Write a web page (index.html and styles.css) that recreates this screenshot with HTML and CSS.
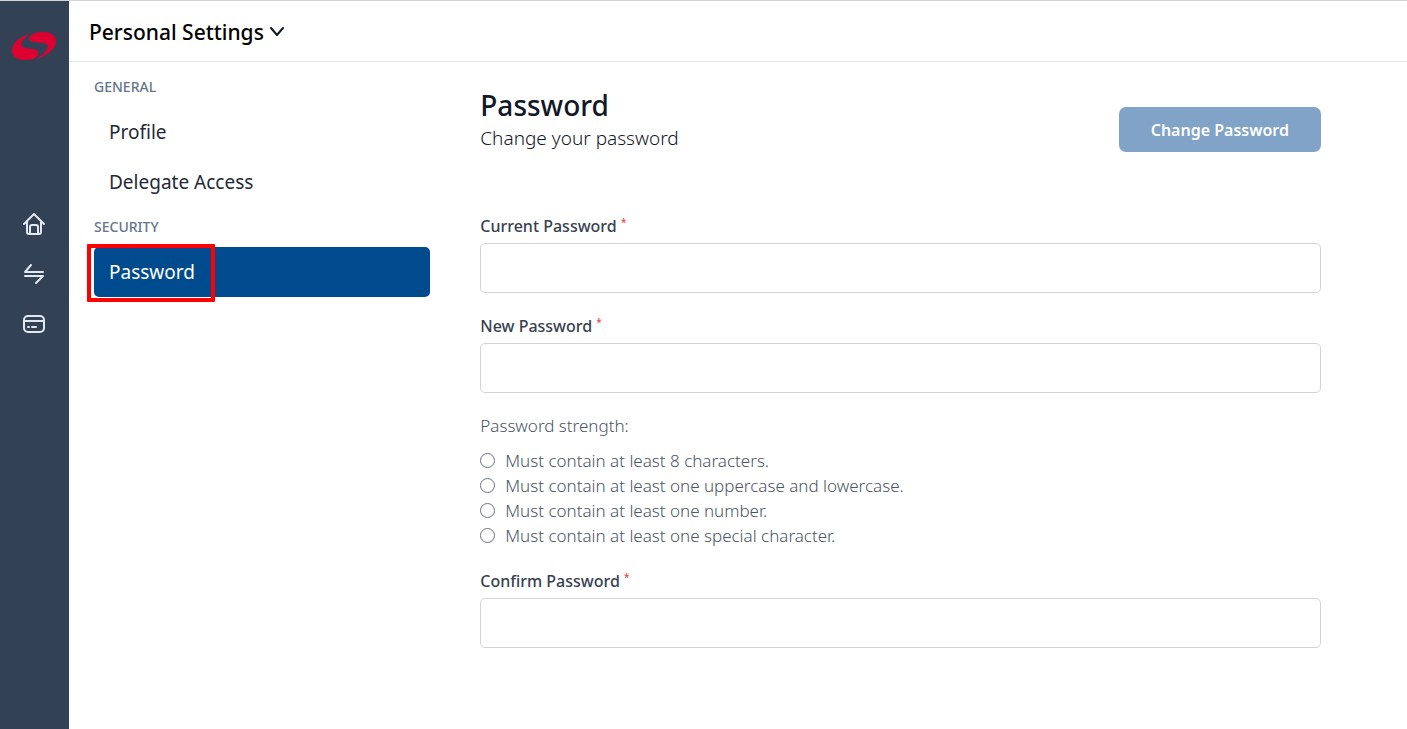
FILE: index.html
```html
<!DOCTYPE html>
<html lang="en">
<head>
    <meta charset="UTF-8">
    <meta name="viewport" content="width=device-width, initial-scale=1.0">
    <title>Personal Settings</title>
    <link rel="stylesheet" href="styles.css">
</head>
<body>

<aside class="sidebar">
    <a href="/" class="logo" aria-label="Start page">
        <svg width="46" height="30" viewBox="0 0 46 30" fill="#de0030">
            <path d="M19 3C9 5 1 12 1 20c0 6 6 9 14 9 7 0 12-3 12-6 1-3-2-5-6-5l-6-1c-5-1-6-3-4-6 1-3 4-6 8-8z"/>
            <path d="M24 28c11-2 21-10 21-18 0-6-6-9-14-9-7 0-12 3-13 6 0 3 3 4 7 4l7 1c5 1 6 3 4 6-2 4-7 8-12 10z"/>
        </svg>
    </a>
    <nav class="side-nav">
        <a href="/home" aria-label="Home">
            <svg class="icon" width="22" height="22" viewBox="0 0 22 22">
                <path d="M1 11L11 1l10 10M4 9v10a2 2 0 0 0 2 2h10a2 2 0 0 0 2-2V9"/>
                <path d="M7 21v-7a2 2 0 0 1 2-2h4a2 2 0 0 1 2 2v7"/>
            </svg>
        </a>
        <a href="/transfers" aria-label="Transfers">
            <svg class="icon" width="22" height="22" viewBox="0 0 22 22">
                <path d="M8 2L2 9h18M2 13h18l-7 7"/>
            </svg>
        </a>
        <a href="/cards" aria-label="Cards">
            <svg class="icon" width="22" height="22" viewBox="0 0 22 22">
                <rect x="1" y="3" width="20" height="16" rx="4"/>
                <path d="M1 8h20M5 14h1M9 14h4"/>
            </svg>
        </a>
    </nav>
</aside>

<div class="page">
    <header>
        <button type="button" class="title-btn">
            Personal Settings
            <svg width="16" height="10" viewBox="0 0 16 10" fill="none" stroke="#111827" stroke-width="2" stroke-linecap="round" stroke-linejoin="round">
                <path d="M2 1l6 7 6-7"/>
            </svg>
        </button>
    </header>

    <div class="content">
        <nav class="settings-nav">
            <h2>GENERAL</h2>
            <a href="/settings/profile">Profile</a>
            <a href="/settings/delegate-access">Delegate Access</a>
            <h2>SECURITY</h2>
            <a href="/settings/password" class="active">Password<span class="marker"></span></a>
        </nav>

        <main>
            <form>
                <div class="form-header">
                    <div>
                        <h1>Password</h1>
                        <p>Change your password</p>
                    </div>
                    <button type="submit" class="submit-btn" disabled>Change Password</button>
                </div>

                <div class="field">
                    <label for="current">Current Password <sup>*</sup></label>
                    <input type="password" id="current">
                </div>
                <div class="field">
                    <label for="new">New Password <sup>*</sup></label>
                    <input type="password" id="new">
                </div>

                <div class="strength">
                    <p>Password strength:</p>
                    <ul>
                        <li><input type="radio" id="rule-length"><label for="rule-length">Must contain at least 8 characters.</label></li>
                        <li><input type="radio" id="rule-case"><label for="rule-case">Must contain at least one uppercase and lowercase.</label></li>
                        <li><input type="radio" id="rule-number"><label for="rule-number">Must contain at least one number.</label></li>
                        <li><input type="radio" id="rule-special"><label for="rule-special">Must contain at least one special character.</label></li>
                    </ul>
                </div>

                <div class="field">
                    <label for="confirm">Confirm Password <sup>*</sup></label>
                    <input type="password" id="confirm">
                </div>
            </form>
        </main>
    </div>
</div>

</body>
</html>
```
FILE: styles.css
```css
* {
    box-sizing: border-box;
}

body {
    margin: 0;
    min-height: 100vh;
    display: flex;
    border-top: 1px solid #d4d4d4;
    font-family: "Segoe UI", "Noto Sans", "Open Sans", sans-serif;
    font-size: 16px;
    line-height: 25px;
    color: #111827;
    background: white;
}

h1, h2, p, ul {
    margin: 0;
    padding: 0;
}

.sidebar {
    width: 69px;
    background: #334155;
    display: flex;
    flex-direction: column;
    align-items: center;
    padding: 30px 1px 0 0;
}

.logo, .side-nav a {
    display: flex;
}

.side-nav {
    display: flex;
    flex-direction: column;
    gap: 28px;
    margin-top: 152px;
}

.icon {
    fill: none;
    stroke: #e2e8f0;
    stroke-width: 2;
    stroke-linecap: round;
    stroke-linejoin: round;
}

.page {
    flex: 1;
}

header {
    height: 61px;
    display: flex;
    align-items: center;
    padding: 2px 20px 0;
    border-bottom: 1px solid #e5e7eb;
}

.title-btn {
    display: flex;
    align-items: center;
    gap: 5px;
    padding: 0;
    border: none;
    background: none;
    font-family: inherit;
    font-size: 21px;
    font-weight: 500;
    color: black;
    cursor: pointer;
}

.content {
    display: grid;
    grid-template-columns: 2fr 5fr;
    gap: 50px;
    padding: 12px 86px 40px 25px;
}

.settings-nav h2 {
    font-size: 14px;
    font-weight: 500;
    line-height: 25px;
    margin-bottom: 8px;
    color: #64748b;
}

.settings-nav a {
    display: block;
    position: relative;
    padding: 0 15px;
    border-radius: 5px;
    font-size: 19px;
    line-height: 50px;
    color: #1f2937;
    text-decoration: none;
}

.settings-nav a + h2 {
    margin-top: 7px;
}

.settings-nav a.active {
    background: #004b8d;
    color: white;
}

/* red frame around the active item */
.marker {
    position: absolute;
    left: -7px;
    top: -3px;
    width: 128px;
    height: 58px;
    border: 4px solid red;
    border-radius: 1px;
}

.form-header {
    display: flex;
    justify-content: space-between;
    align-items: flex-end;
    padding: 12px 0 61px;
}

h1 {
    font-size: 28px;
    font-weight: 500;
    line-height: 38px;
}

.form-header p {
    font-size: 19px;
    font-weight: 300;
    line-height: 28px;
}

.submit-btn {
    height: 45px;
    padding: 0 32px;
    border: none;
    border-radius: 7px;
    background: #80a3c7;
    font-family: inherit;
    font-size: 16px;
    font-weight: 600;
    color: white;
}

.field {
    margin-bottom: 20px;
}

.field label {
    display: block;
    margin-bottom: 4px;
    font-weight: 500;
    line-height: 26px;
    color: #374151;
}

.field sup {
    font-size: 10px;
    line-height: 0;
    color: #ef4444;
}

.field input {
    display: block;
    width: 100%;
    height: 50px;
    padding: 0 15px;
    border: 1px solid #d1d5db;
    border-radius: 5px;
    font-size: 16px;
}

.strength {
    margin-bottom: 20px;
    font-size: 17px;
    font-weight: 300;
    color: #4b5563;
}

.strength ul {
    margin-top: 10px;
    list-style: none;
}

.strength li {
    display: flex;
    align-items: center;
    gap: 10px;
}

.strength input {
    appearance: none;
    width: 15px;
    height: 15px;
    margin: 0;
    border: 1px solid #6b7280;
    border-radius: 50%;
}
```
